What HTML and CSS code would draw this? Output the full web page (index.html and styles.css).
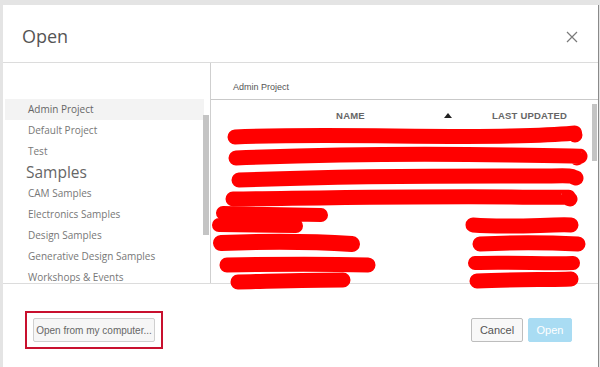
FILE: index.html
```html
<!DOCTYPE html>
<html lang="en">
<head>
  <meta charset="UTF-8" />
  <title>Open</title>
  <link rel="stylesheet" href="styles.css">
</head>
<body>

  <div class="dialog">

    <!-- Header -->
    <div class="dialog-header">
      <div class="dialog-title">Open</div>
      <svg class="close" width="12" height="12" viewBox="0 0 12 12">
        <path d="M1 1 L11 11 M11 1 L1 11" stroke="#7a7a7a" stroke-width="1.2" fill="none" />
      </svg>
    </div>

    <!-- Main -->
    <div class="dialog-main">
      <div class="projects">
        <div class="project-list">
          <div class="project active">Admin Project</div>
          <div class="project">Default Project</div>
          <div class="project">Test</div>
          <div class="group-title">Samples</div>
          <div class="project">CAM Samples</div>
          <div class="project">Electronics Samples</div>
          <div class="project">Design Samples</div>
          <div class="project">Generative Design Samples</div>
          <div class="project">Workshops &amp; Events</div>
        </div>
        <div class="scrollbar left-scroll"></div>
      </div>

      <div class="files">
        <div class="crumb">Admin Project</div>
        <div class="file-table">
          <div class="table-head">
            <div class="th-name">NAME</div>
            <div class="th-sort">
              <svg width="8" height="5" viewBox="0 0 8 5"><path d="M0 5 L4 0 L8 5 Z" fill="#222" /></svg>
            </div>
            <div class="th-date">LAST UPDATED</div>
          </div>
          <div class="scrollbar table-scroll"></div>

          <!-- redacted rows -->
          <svg class="redact" width="387" height="190" viewBox="0 0 387 190">
            <g stroke="#ff0000" stroke-linecap="round" stroke-linejoin="round" fill="none">
              <path d="M24 37 C 110 33, 220 38, 300 36 S 360 31, 364 35" stroke-width="15" />
              <path d="M25 58 C 100 55, 200 53, 300 55 S 360 55, 366 58" stroke-width="15" />
              <path d="M28 80 C 110 77, 200 76, 290 76 S 355 75, 365 78" stroke-width="15" />
              <path d="M22 99 C 110 98, 220 96, 300 97 S 350 96, 359 99" stroke-width="15" />
              <path d="M12 113 L 110 115 M 8 125 L 85 126" stroke-width="14" />
              <path d="M10 143 C 60 141, 110 142, 141 144" stroke-width="16" />
              <path d="M16 165 C 70 164, 120 164, 157 165" stroke-width="15" />
              <path d="M27 182 C 70 181, 100 180, 132 180" stroke-width="15" />
              <path d="M262 125 C 300 128, 340 124, 360 125" stroke-width="15" />
              <path d="M269 144 C 310 142, 345 143, 367 144" stroke-width="15" />
              <path d="M264 163 C 300 162, 340 164, 362 163" stroke-width="14" />
              <path d="M266 181 C 300 179, 340 180, 360 179" stroke-width="15" />
            </g>
          </svg>
        </div>
      </div>
    </div>

    <!-- Footer -->
    <div class="dialog-footer">
      <div class="highlight-box">
        <button class="btn btn-upload">Open from my computer...</button>
      </div>
      <div class="footer-actions">
        <button class="btn btn-cancel">Cancel</button>
        <button class="btn btn-open">Open</button>
      </div>
    </div>

  </div>

</body>
</html>
```

FILE: styles.css
```css
html, body {
  margin: 0;
  padding: 0;
  height: 100%;
  overflow: hidden;
  background: #e4e4e4;
  font-family: "Open Sans", sans-serif;
}

.dialog {
  margin: 5px 1px 0 3px;
  height: 362px;
  background: #fff;
  border-right: 1px solid #8a8a8a;
  display: flex;
  flex-direction: column;
}

.dialog-header {
  height: 57px;
  flex: none;
  border-bottom: 1px solid #dcdcdc;
  display: flex;
  align-items: center;
  justify-content: space-between;
  padding: 0 20px 0 19px;
}

.dialog-title {
  font-size: 18px;
  color: #555;
  margin-top: 4px;
}

.close {
  margin-top: 6px;
}

.dialog-main {
  height: 220px;
  flex: none;
  display: flex;
  border-bottom: 1px solid #dcdcdc;
}

.projects {
  width: 207px;
  flex: none;
  border-right: 1px solid #cfcfcf;
  position: relative;
  overflow: hidden;
}

.project-list {
  padding-top: 36px;
}

.project {
  height: 21px;
  line-height: 21px;
  font-size: 10px;
  color: #777;
  padding-left: 25px;
  margin-right: 6px;
  white-space: nowrap;
}

.project.active {
  background: #f3f3f3;
  color: #666;
  margin-left: 2px;
  padding-left: 23px;
}

.group-title {
  height: 21px;
  line-height: 21px;
  font-size: 15.5px;
  color: #666;
  padding-left: 23px;
}

.scrollbar {
  position: absolute;
  background: #c4c4c4;
}

.left-scroll {
  right: 1px;
  top: 52px;
  width: 6px;
  height: 120px;
}

.files {
  flex: 1;
  display: flex;
  flex-direction: column;
}

.crumb {
  font-family: "Liberation Sans", Arial, sans-serif;
  font-size: 9px;
  color: #555;
  line-height: 10px;
  padding: 19px 0 0 22px;
  height: 17px;
}

.file-table {
  flex: 1;
  border-top: 1px solid #c9c9c9;
  position: relative;
}

.table-head {
  display: grid;
  grid-template-columns: 233px 8px 1fr;
  align-items: center;
  height: 30px;
  font-family: "Liberation Sans", Arial, sans-serif;
  font-size: 9.5px;
  font-weight: bold;
  color: #666;
  letter-spacing: 0.2px;
}

.th-name {
  text-align: center;
  padding-left: 46px;
}

.th-sort {
  display: flex;
  align-items: center;
  justify-content: center;
}

.th-date {
  text-align: right;
  padding-right: 31px;
}

.table-scroll {
  right: 1px;
  top: 4px;
  width: 5px;
  height: 57px;
}

.redact {
  position: absolute;
  left: 0;
  top: 0;
  overflow: visible;
}

.dialog-footer {
  flex: 1;
  display: flex;
  align-items: center;
  justify-content: space-between;
  padding: 0 26px 0 22px;
}

.highlight-box {
  border: 2px solid #c8102e;
  padding: 5px 6px;
  margin-top: 9px;
}

.btn {
  font-family: "Liberation Sans", Arial, sans-serif;
  height: 24px;
  border-radius: 2px;
  cursor: pointer;
  white-space: nowrap;
  padding: 0;
}

.btn-upload {
  width: 122px;
  font-size: 10px;
  color: #666;
  background: #f6f6f6;
  border: 1px solid #cfcfcf;
  display: block;
}

.footer-actions {
  display: flex;
  gap: 5px;
  margin-top: 9px;
}

.btn-cancel {
  width: 52px;
  font-size: 11px;
  color: #555;
  background: #f8f8f8;
  border: 1px solid #bdbdbd;
}

.btn-open {
  width: 44px;
  font-size: 11px;
  color: #fff;
  background: #a9dcf3;
  border: 1px solid #a9dcf3;
}
```
